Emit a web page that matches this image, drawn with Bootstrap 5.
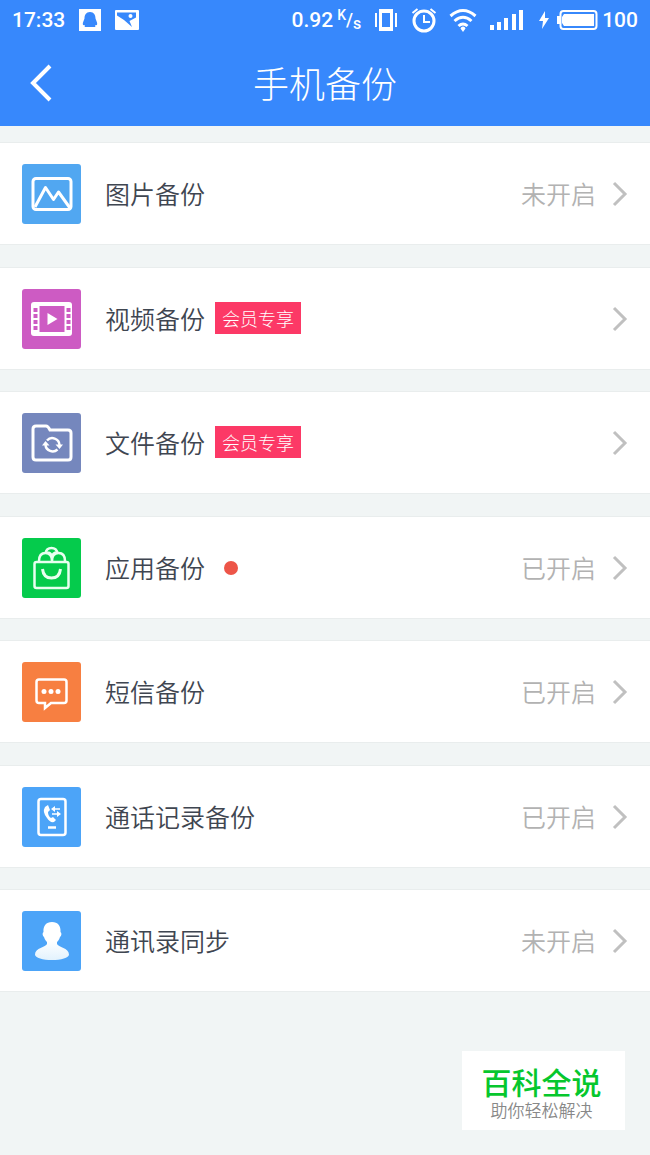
<!DOCTYPE html>
<html lang="zh-CN">
<head>
<meta charset="utf-8">
<meta name="viewport" content="width=device-width, initial-scale=1">
<title>手机备份</title>
<link href="https://cdn.jsdelivr.net/npm/bootstrap@5.3.0/dist/css/bootstrap.min.css" rel="stylesheet">
<style>
body { background: #f1f5f5; font-family: "Noto Sans CJK SC", sans-serif; font-weight: 350; color: #3f4651; }
svg { display: block; flex: none; }
.app-head { background: #3788fc; color: #fff; }
.status { height: 40px; padding: 0 12px; font: 500 21px/40px Roboto, sans-serif; }
.notices { gap: 14px; }
.rate { width: 24px; font-size: 18px; line-height: 20px; }
.rate sup { font-size: 14px; top: -6px; }
.rate sub { font-size: 16px; bottom: -3px; }
.title-bar { height: 86px; padding: 0 24px; }
.title-bar h1 { margin: 0 0 2px; font-size: 36px; line-height: 48px; font-weight: 300; }
.side { width: 36px; }
.rows { padding-top: 16px; }
.row-link { height: 103px; padding: 0 22px; margin-bottom: 22px; background: #fff; color: inherit; border: solid #e9eded; border-width: 1px 0; font-size: 25px; line-height: 36px; }
.row-link:nth-child(even) { margin-bottom: 21px; }
.row-link:hover { color: inherit; }
.tile { margin-right: 24px; }
.vip { margin-left: 10px; padding: 0 7px; background: #fc3966; color: #fff; font-size: 18px; line-height: 32px; font-weight: 300; }
.dot { width: 14px; height: 14px; margin-left: 19px; background: #ed5548; }
.row-link span { margin-bottom: 1px; }
.state { color: #b2b2b2; margin-right: 15px; }
.stamp { right: 25px; bottom: 25px; width: 163px; height: 79px; padding: 8px 4px 0 0; background: #fff; text-align: center; }
.stamp strong { font-size: 30px; line-height: 30px; font-weight: 500; color: #06c72d; }
.stamp small { font-size: 17px; line-height: 28px; font-weight: 350; color: #888; }
</style>
</head>
<body class="min-vh-100 position-relative">
<header class="app-head">
  <div class="status d-flex align-items-center justify-content-between">
    <div class="notices d-flex align-items-center">
      <span>17:33</span>
      <svg width="22" height="22" viewBox="0 0 22 22"><path fill="#fff" d="M0 0h22v22H0z"/><path fill="#3788fc" d="M11 3C7 3 5.500 6 5.500 9.500L4 13.500c-.5 2 0 3 1.300 2.500L6 17l-.5 1h11l-.5-1 .7-1c1.300.5 1.800-.5 1.300-2.500l-1.500-4C16.500 6 15 3 11 3z"/></svg>
      <svg width="24" height="20" viewBox="0 0 24 20"><rect width="24" height="20" rx="1" fill="#fff"/><path fill="#3788fc" d="M2 2.500h19v5L14.500 11l2.500 6-8-7-7-4.500z"/><circle cx="15.500" cy="6" r="2" fill="#fff"/></svg>
    </div>
    <div class="d-flex align-items-center">
      <span>0.92</span>
      <span class="rate ms-1 text-nowrap"><sup>K</sup>/<sub>s</sub></span>
      <svg class="ms-2 me-1" width="32" height="24" viewBox="1 0 32 24" fill="none" stroke="#fff"><path stroke-width="3" d="M12.500 2.500h11v19h-11z"/><path stroke-width="4" d="M11 3h14M11 21h14"/><path stroke-width="2" d="M8 5v14M28 5v14"/></svg>
      <svg class="me-1" width="36" height="26" viewBox="-1 0 36 26" fill="none" stroke="#fff"><circle cx="18" cy="14" r="10" stroke-width="3"/><path stroke-width="2" d="M18 8v7h6M6.500 6l5-4M29.500 6l-5-4"/></svg>
      <svg class="ms-1" width="28" height="24" viewBox="0 0 28 24" fill="none" stroke="#fff" stroke-width="3"><path d="M1.500 8q12.500-11 25 0M5.500 13q8.500-7.500 17 0M9.500 18q4.500-4 9 0"/><path fill="#fff" stroke="none" d="M14 18.500a3 3 0 0 1 2.500 2L14 24l-2.500-3.500a3 3 0 0 1 2.500-2z"/></svg>
      <svg class="ms-2 me-2" width="46" height="22" viewBox="0 0 46 22" fill="#fff"><path d="M5 16h4v5H5zM12 13h4v8h-4zM19 9h4v12h-4zM27 5h4v16h-4zM34 1h4v20h-4z"/></svg>
      <svg width="10" height="18" viewBox="0 0 10 18" fill="#fff"><path d="M6 0L0 10h4L3 18l7-11H6z"/></svg>
      <svg class="ms-2" width="41" height="22" viewBox="0 0 41 22"><path fill="#fff" d="M0 7h4v8H0z"/><rect x="3.500" y="2" width="36" height="18" rx="3" fill="none" stroke="#fff" stroke-width="2"/><path fill="#fff" d="M7 5h30v12H7l-2-3V8z"/></svg>
      <span class="ms-1">100</span>
    </div>
  </div>
  <div class="title-bar d-flex align-items-center justify-content-between">
    <button type="button" class="side btn p-0 border-0" aria-label="返回"><svg width="36" height="40" viewBox="0 0 36 40"><path d="M26 3L9 20l17 17" fill="none" stroke="#fff" stroke-width="4"/></svg></button>
    <h1>手机备份</h1>
    <span class="side"></span>
  </div>
</header>
<main class="rows">
  <a href="#" class="row-link d-flex align-items-center text-decoration-none">
    <svg class="tile" width="59" height="60" viewBox="0 0 59 60"><rect width="59" height="60" rx="3" fill="#51a7f1"/><g fill="none" stroke="#fff" stroke-width="3"><rect x="11" y="14.500" width="38" height="31" rx="3"/><path d="M13 43L23.500 23.500l8 12 5-7.500L48 44" stroke-linejoin="round"/></g></svg>
    <span>图片备份</span>
    <span class="state ms-auto">未开启</span>
    <svg width="17" height="28" viewBox="0 0 17 28"><path id="chevron" d="M3 3l11 11L3 25" fill="none" stroke="#c0c0c0" stroke-width="3"/></svg>
  </a>
  <a href="#" class="row-link d-flex align-items-center text-decoration-none">
    <svg class="tile" width="59" height="60" viewBox="0 0 59 60"><rect width="59" height="60" rx="3" fill="#cd5bc3"/><rect x="9" y="13" width="41" height="34" rx="3" fill="#fff"/><path fill="#cd5bc3" d="M17.500 17h25v26h-25zM11.500 19h4v4h-4zM11.500 25h4v4h-4zM11.500 31h4v4h-4zM11.500 37h4v4h-4zM44.500 19h4v4h-4zM44.500 25h4v4h-4zM44.500 31h4v4h-4zM44.500 37h4v4h-4z"/><path d="M25.500 24l10 6-10 6z" fill="#fff"/></svg>
    <span>视频备份</span><span class="vip">会员专享</span>
    <svg class="ms-auto" width="17" height="28" viewBox="0 0 17 28"><use href="#chevron"/></svg>
  </a>
  <a href="#" class="row-link d-flex align-items-center text-decoration-none">
    <svg class="tile" width="59" height="60" viewBox="0 0 59 60"><rect width="59" height="60" rx="3" fill="#7587bd"/><g fill="none" stroke="#fff" stroke-width="3"><path d="M14 13h10q2 0 4 4h18q3 0 3 3v24q0 3-3 3H14q-3 0-3-3V16q0-3 3-3z"/><path stroke-width="2.500" d="M25 27.500a7.200 7.200 0 0 1 12.500 4.500M35.500 36.500a7.200 7.200 0 0 1-12-4.500"/></g><path fill="#fff" d="M33.500 31.500h7.500L37.500 36zM20 32.500h7.500L23.500 28z"/></svg>
    <span>文件备份</span><span class="vip">会员专享</span>
    <svg class="ms-auto" width="17" height="28" viewBox="0 0 17 28"><use href="#chevron"/></svg>
  </a>
  <a href="#" class="row-link d-flex align-items-center text-decoration-none">
    <svg class="tile" width="59" height="60" viewBox="0 0 59 60"><rect width="59" height="60" rx="3" fill="#05cb4c"/><g fill="none" stroke="#e8fff0" stroke-width="2.500"><rect x="12.500" y="24" width="34" height="26" rx="2"/><path d="M20.500 31q1 9 9 9t9-9" stroke-width="3"/><path d="M17 23q0-8 6.500-8t6.500 8q0-8 6.500-8t6.500 8M23.500 15q1-5 6-5t6 5M25 14.500q4 0 5 4 1-4 5-4"/></g></svg>
    <span>应用备份</span><i class="dot rounded-circle"></i>
    <span class="state ms-auto">已开启</span>
    <svg width="17" height="28" viewBox="0 0 17 28"><use href="#chevron"/></svg>
  </a>
  <a href="#" class="row-link d-flex align-items-center text-decoration-none">
    <svg class="tile" width="59" height="60" viewBox="0 0 59 60"><rect width="59" height="60" rx="3" fill="#f77f41"/><path d="M17 17.500h25q2.500 0 2.500 2.500v18.500q0 2.500-2.500 2.500H29l-6 5v-5h-6q-2.500 0-2.500-2.500V20q0-2.500 2.500-2.500z" fill="none" stroke="#fff" stroke-width="2.500"/><g fill="#fff"><circle cx="22" cy="29.500" r="2.500"/><circle cx="29" cy="29.500" r="2.500"/><circle cx="36" cy="29.500" r="2.500"/></g></svg>
    <span>短信备份</span>
    <span class="state ms-auto">已开启</span>
    <svg width="17" height="28" viewBox="0 0 17 28"><use href="#chevron"/></svg>
  </a>
  <a href="#" class="row-link d-flex align-items-center text-decoration-none">
    <svg class="tile" width="59" height="60" viewBox="0 0 59 60"><rect width="59" height="60" rx="3" fill="#4ca4f8"/><g fill="none" stroke="#fff"><rect x="16.500" y="12" width="27" height="36" rx="2.500" stroke-width="2.500"/><path stroke-width="2.500" d="M26 40.500h8"/><path stroke-width="1.500" d="M31 22h7M30 27h7"/></g><path fill="#fff" d="M23 20l3-2 2 5-2 2q0 4 3 6l2-1 3 3-2 2q-4 1-7-4-5-6-2-11zM33 19v6l-4-3zM35 24v6l4-3z"/></svg>
    <span>通话记录备份</span>
    <span class="state ms-auto">已开启</span>
    <svg width="17" height="28" viewBox="0 0 17 28"><use href="#chevron"/></svg>
  </a>
  <a href="#" class="row-link d-flex align-items-center text-decoration-none">
    <svg class="tile" width="59" height="60" viewBox="0 0 59 60"><defs><linearGradient id="bust" x2="0" y2="1"><stop offset=".5" stop-color="#fff"/><stop offset="1" stop-color="#e2f2fd"/></linearGradient></defs><rect width="59" height="60" rx="3" fill="#4ca4f8"/><path fill="url(#bust)" d="M30 11c6 0 9 4 8.500 10 1.500 1 1 4-.5 5-1 3-2 4-3 5v2c1 3 12 4 12 10.500C47 47 39 49 30 49s-17-2-17-5.500C13 37 24 36 25 33v-2c-1-1-2-2-3-5-1.500-1-2-4-.5-5C21 15 24 11 30 11z"/></svg>
    <span>通讯录同步</span>
    <span class="state ms-auto">未开启</span>
    <svg width="17" height="28" viewBox="0 0 17 28"><use href="#chevron"/></svg>
  </a>
</main>
<div class="stamp position-absolute d-flex flex-column justify-content-center"><strong>百科全说</strong><small>助你轻松解决</small></div>
<script src="https://cdn.jsdelivr.net/npm/bootstrap@5.3.0/dist/js/bootstrap.bundle.min.js"></script>
</body>
</html>
